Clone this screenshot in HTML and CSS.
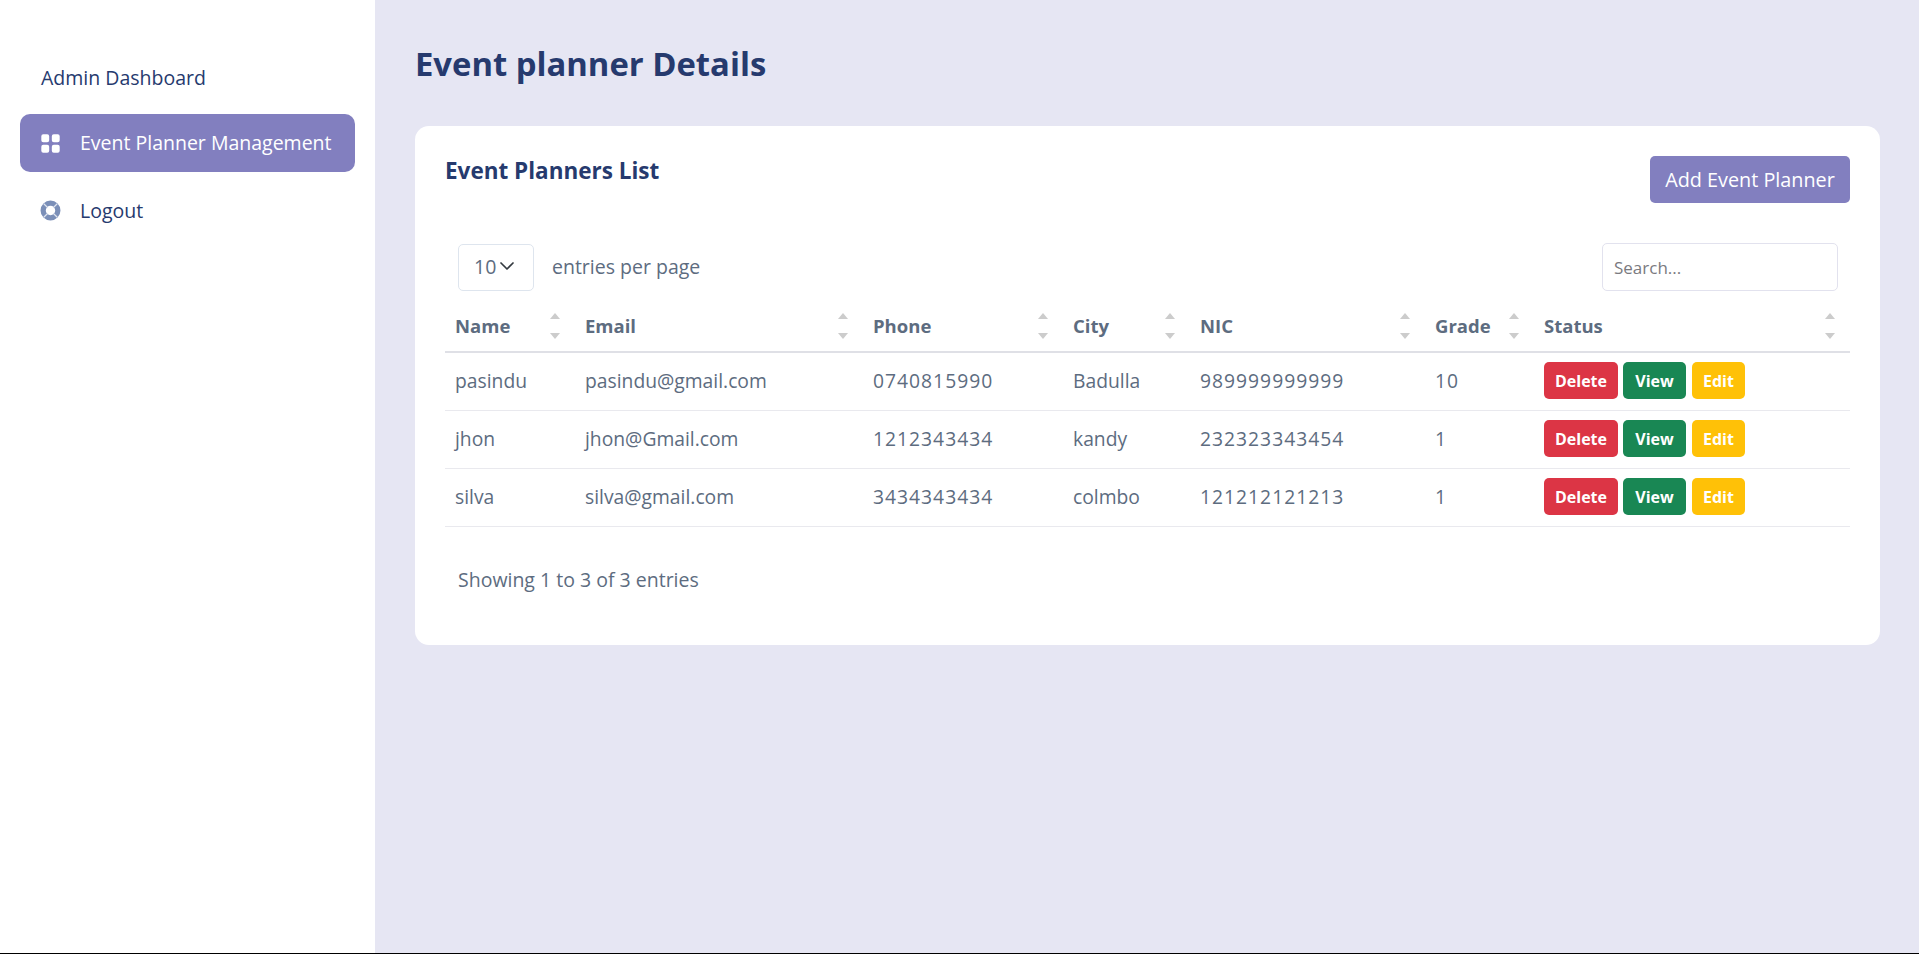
FILE: index.html
```html
<!DOCTYPE html>
<html lang="en">

<head>
 <meta charset="UTF-8">
 <meta name="viewport" content="width=device-width">
 <title>Event planner Details</title>
 <link rel="stylesheet" href="styles.css">
</head>

<body>

 <aside class="sidebar">
  <a class="nav-title" href="#">Admin Dashboard</a>
  <a class="nav-link active" href="#">
   <svg class="nav-icon" viewBox="0 0 16 16" fill="currentColor"><path d="M1 2.5A1.5 1.5 0 0 1 2.5 1h3A1.5 1.5 0 0 1 7 2.5v3A1.5 1.5 0 0 1 5.5 7h-3A1.5 1.5 0 0 1 1 5.5zm8 0A1.5 1.5 0 0 1 10.5 1h3A1.5 1.5 0 0 1 15 2.5v3A1.5 1.5 0 0 1 13.5 7h-3A1.5 1.5 0 0 1 9 5.5zm-8 8A1.5 1.5 0 0 1 2.5 9h3A1.5 1.5 0 0 1 7 10.5v3A1.5 1.5 0 0 1 5.5 15h-3A1.5 1.5 0 0 1 1 13.5zm8 0a1.5 1.5 0 0 1 1.5-1.5h3a1.5 1.5 0 0 1 1.5 1.5v3a1.5 1.5 0 0 1-1.5 1.5h-3A1.5 1.5 0 0 1 9 13.5z"/></svg>
   <span class="nav-text">Event Planner Management</span>
  </a>
  <a class="nav-link logout" href="#">
   <svg class="nav-icon" viewBox="0 0 20 20"><circle cx="10" cy="10" r="7" fill="none" stroke="#7b8fb8" stroke-width="5"/><path d="M3.6 3.6l3.6 3.6M16.4 3.6l-3.6 3.6M3.6 16.4l3.6-3.6M16.4 16.4l-3.6-3.6" stroke="#dfe4ef" stroke-width="1.2"/></svg>
   Logout
  </a>
 </aside>

 <main class="content">
  <h1>Event planner Details</h1>

  <section class="card">
   <div class="card-head">
    <h2>Event Planners List</h2>
    <button class="btn-add" type="button">Add Event Planner</button>
   </div>

   <div class="table-top">
    <div class="per-page">
     <span class="select">10
      <svg viewBox="0 0 16 16" fill="none" stroke="#343a40" stroke-width="1.7" stroke-linecap="round" stroke-linejoin="round"><path d="M2 5l6 6 6-6"/></svg>
     </span>
     <span class="per-text">entries per page</span>
    </div>
    <input class="search" placeholder="Search...">
   </div>

   <table>
    <colgroup>
     <col class="c-name"><col class="c-email"><col class="c-phone"><col class="c-city"><col class="c-nic"><col class="c-grade"><col>
    </colgroup>
    <thead>
     <tr>
      <th><div class="th-in">Name<span class="sort"></span></div></th>
      <th><div class="th-in">Email<span class="sort"></span></div></th>
      <th><div class="th-in">Phone<span class="sort"></span></div></th>
      <th><div class="th-in">City<span class="sort"></span></div></th>
      <th><div class="th-in">NIC<span class="sort"></span></div></th>
      <th><div class="th-in">Grade<span class="sort"></span></div></th>
      <th><div class="th-in">Status<span class="sort"></span></div></th>
     </tr>
    </thead>
    <tbody>
     <tr>
      <td>pasindu</td><td>pasindu@gmail.com</td><td class="num">0740815990</td><td>Badulla</td><td class="num">989999999999</td><td class="num">10</td>
      <td><div class="actions"><button class="btn red">Delete</button><button class="btn green">View</button><button class="btn yellow">Edit</button></div></td>
     </tr>
     <tr>
      <td>jhon</td><td>jhon@Gmail.com</td><td class="num">1212343434</td><td>kandy</td><td class="num">232323343454</td><td class="num">1</td>
      <td><div class="actions"><button class="btn red">Delete</button><button class="btn green">View</button><button class="btn yellow">Edit</button></div></td>
     </tr>
     <tr>
      <td>silva</td><td>silva@gmail.com</td><td class="num">3434343434</td><td>colmbo</td><td class="num">121212121213</td><td class="num">1</td>
      <td><div class="actions"><button class="btn red">Delete</button><button class="btn green">View</button><button class="btn yellow">Edit</button></div></td>
     </tr>
    </tbody>
   </table>

   <p class="info">Showing 1 to 3 of 3 entries</p>
  </section>
 </main>

</body>

</html>
```

FILE: styles.css
```css
* {
    margin: 0;
    padding: 0;
    box-sizing: border-box;
}

body {
    display: flex;
    height: 100vh;
    background-color: #e6e6f3;
    border-bottom: 1px solid #000;
    font-family: 'Open Sans', 'Lato', sans-serif;
    font-size: 19.5px;
    color: #5d6c80;
    overflow: hidden;
}

a {
    text-decoration: none;
}

/* Menu lateral */
.sidebar {
    width: 375px;
    flex-shrink: 0;
    background-color: #fff;
    padding: 61px 20px 0;
    display: flex;
    flex-direction: column;
}

.nav-title {
    color: #263a6e;
    padding-left: 21px;
    height: 34px;
    line-height: 34px;
    margin-bottom: 19px;
}

.nav-link {
    display: flex;
    align-items: center;
    gap: 19px;
    height: 58px;
    padding-left: 20px;
    border-radius: 10px;
    color: #263a6e;
}

.nav-link.active {
    background-color: #827fbf;
    color: #fff;
}

.nav-link.logout {
    margin-top: 9px;
}

.nav-text {
    padding-bottom: 2px;
}

.nav-icon {
    width: 21px;
    height: 21px;
    flex-shrink: 0;
}

/* Contenido */
.content {
    flex: 1;
    padding: 44px 39px 0 40px;
}

h1 {
    font-size: 32.8px;
    line-height: 40px;
    font-weight: 700;
    color: #263a6e;
    margin-bottom: 42px;
}

.card {
    background-color: #fff;
    border-radius: 14px;
    height: 519px;
    padding: 30px;
}

.card-head {
    display: flex;
    justify-content: space-between;
    align-items: flex-start;
    height: 87px;
}

h2 {
    font-size: 22.5px;
    line-height: 30px;
    font-weight: 700;
    color: #263a6e;
}

.btn-add {
    width: 200px;
    height: 47px;
    border: none;
    border-radius: 5px;
    background-color: #827fbf;
    color: #fff;
    font: inherit;
    font-size: 19.8px;
}

.table-top {
    display: flex;
    justify-content: space-between;
    align-items: center;
    padding: 0 12px 0 13px;
}

.per-page {
    display: flex;
    align-items: center;
    gap: 18px;
}

.per-text {
    padding-bottom: 2px;
}

.select {
    display: flex;
    align-items: center;
    gap: 3px;
    width: 76px;
    height: 47px;
    padding: 0 0 2px 15px;
    border: 1px solid #dee5ee;
    border-radius: 5px;
}

.select svg {
    width: 16px;
    height: 16px;
}

.search {
    width: 236px;
    height: 48px;
    padding: 0 11px;
    border: 1px solid #e2e2ee;
    border-radius: 5px;
    font: inherit;
    font-size: 17px;
    outline: none;
}

.search::placeholder {
    color: #7a7a80;
}

/* Tabla */
table {
    width: 1405px;
    border-collapse: collapse;
    table-layout: fixed;
    margin-top: 10px;
}

.c-name { width: 130px; }
.c-email { width: 288px; }
.c-phone { width: 200px; }
.c-city { width: 127px; }
.c-nic { width: 235px; }
.c-grade { width: 109px; }

th {
    height: 51px;
    padding: 0 9px 1px 10px;
    text-align: left;
    font-size: 18.5px;
    font-weight: 700;
    border-bottom: 2px solid #dfe0e6;
}

.th-in {
    display: flex;
    justify-content: space-between;
    align-items: center;
}

/* Flechas de orden */
.sort {
    display: flex;
    flex-direction: column;
    gap: 14px;
    margin-right: 6px;
}

.sort::before {
    content: "";
    border-left: 5px solid transparent;
    border-right: 5px solid transparent;
    border-bottom: 6px solid #ccc;
}

.sort::after {
    content: "";
    border-left: 5px solid transparent;
    border-right: 5px solid transparent;
    border-top: 6px solid #ccc;
}

td {
    height: 58px;
    padding: 0 9px 1px 10px;
    font-size: 19.3px;
    border-bottom: 1px solid #e9e9ee;
}

td.num {
    letter-spacing: 1px;
}

.actions {
    display: flex;
    gap: 5px;
}

.btn {
    height: 37px;
    border: none;
    border-radius: 5px;
    color: #fff;
    font: inherit;
    font-size: 16px;
    font-weight: 700;
}

.red {
    width: 74px;
    background-color: #dc3545;
}

.green {
    width: 63px;
    margin-right: 1px;
    background-color: #198754;
}

.yellow {
    width: 53px;
    background-color: #ffc107;
}

.info {
    margin-top: 41px;
    padding-left: 13px;
    line-height: 24px;
}
```
